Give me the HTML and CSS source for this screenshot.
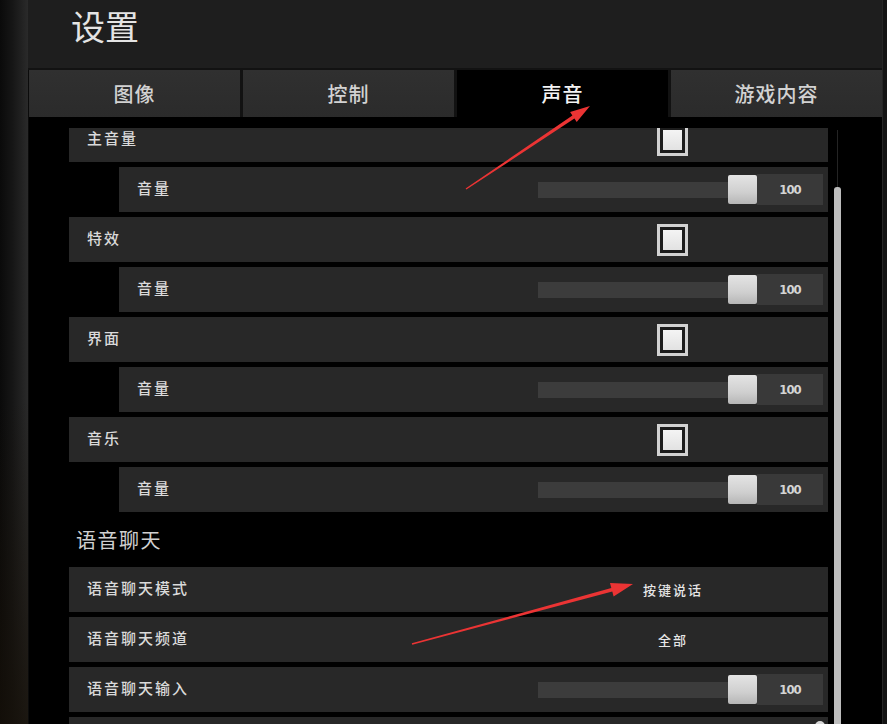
FILE: index.html
```html
<!DOCTYPE html>
<html lang="zh-CN">
<head>
<meta charset="utf-8">
<title>设置</title>
<link rel="stylesheet" href="styles.css">
</head>
<body>
<div class="app">
  <div class="backdrop"></div>
  <div class="panel">
    <header class="head"><h1 class="title">设置</h1></header>
    <nav class="tabs">
      <div class="tab">图像</div>
      <div class="tab">控制</div>
      <div class="tab active">声音</div>
      <div class="tab">游戏内容</div>
    </nav>
    <div class="content">
      <div class="viewport">
        <div class="list">
          <div class="row"><span class="label">主音量</span><div class="ctrl"><span class="check"><span class="check-in"></span></span></div></div>
          <div class="row sub"><span class="label">音量</span><div class="slider"><div class="track"><span class="thumb"></span></div><span class="val">100</span></div></div>
          <div class="row"><span class="label">特效</span><div class="ctrl"><span class="check"><span class="check-in"></span></span></div></div>
          <div class="row sub"><span class="label">音量</span><div class="slider"><div class="track"><span class="thumb"></span></div><span class="val">100</span></div></div>
          <div class="row"><span class="label">界面</span><div class="ctrl"><span class="check"><span class="check-in"></span></span></div></div>
          <div class="row sub"><span class="label">音量</span><div class="slider"><div class="track"><span class="thumb"></span></div><span class="val">100</span></div></div>
          <div class="row"><span class="label">音乐</span><div class="ctrl"><span class="check"><span class="check-in"></span></span></div></div>
          <div class="row sub"><span class="label">音量</span><div class="slider"><div class="track"><span class="thumb"></span></div><span class="val">100</span></div></div>
          <div class="section">语音聊天</div>
          <div class="row"><span class="label">语音聊天模式</span><div class="ctrl"><span class="opt">按键说话</span></div></div>
          <div class="row"><span class="label">语音聊天频道</span><div class="ctrl"><span class="opt">全部</span></div></div>
          <div class="row"><span class="label">语音聊天输入</span><div class="slider"><div class="track"><span class="thumb"></span></div><span class="val">100</span></div></div>
          <div class="row"><span class="label"></span><div class="knob-wrap"><span class="knob"></span></div></div>
        </div>
      </div>
      <div class="scroll"><div class="scroll-thumb"></div></div>
    </div>
  </div>
  <div class="edge"></div>
</div>
<svg class="annot" width="887" height="724" viewBox="0 0 887 724">
  <polygon class="arrow" points="465.6,188.4 572.4,115.6 570.1,112.1 590,106 576.7,122.1 574.4,118.6 466.4,189.6"/>
  <polygon class="arrow" points="411.8,643.3 611.3,588.1 610.0,583.0 633,584 613.6,596.6 612.3,591.5 412.2,644.7"/>
</svg>
</body>
</html>
```
FILE: styles.css
```css
* { box-sizing: border-box; }
html, body { margin: 0; padding: 0; }
body {
  width: 887px;
  height: 724px;
  overflow: hidden;
  background: #000;
  font-family: "Noto Sans CJK SC", "Noto Sans", sans-serif;
  color: #d6d6d6;
  position: relative;
}
.app {
  display: flex;
  height: 724px;
}
.backdrop {
  width: 28px;
  flex: none;
  background:
    linear-gradient(180deg, rgba(0,0,0,0) 55%, rgba(22,16,8,0.75) 100%),
    linear-gradient(90deg, #0a0a0a 0%, #161616 45%, #2a2a2a 100%);
}
.panel {
  flex: none;
  width: 854px;
  background: #000;
  border-left: 1px solid #0b0b0b;
  display: flex;
  flex-direction: column;
}
.edge {
  flex: 1;
  background: linear-gradient(90deg, #262626 0, #262626 1px, #141414 1px);
}
.head {
  height: 70px;
  background: #1e1e1e;
  border-bottom: 2px solid #121212;
  padding: 9px 0 0 43px;
  margin-left: -1px;
}
.title {
  margin: 0;
  font-size: 34px;
  line-height: 34px;
  font-weight: 400;
  color: #e4e4e4;
  letter-spacing: 0;
}
.tabs {
  height: 47px;
  display: grid;
  grid-template-columns: repeat(4, 1fr);
  column-gap: 3px;
  background: #121212;
}
.tab {
  background: linear-gradient(180deg, #303030 0%, #2b2b2b 100%);
  display: flex;
  align-items: center;
  justify-content: center;
  font-size: 20px;
  font-weight: 500;
  color: #d2d2d2;
  letter-spacing: 1px;
  padding-bottom: 1px;
}
.tab.active {
  background: #000;
  color: #f4f4f4;
}
.content {
  flex: 1;
  display: flex;
  min-height: 0;
  position: relative;
}
.viewport {
  margin-top: 11px;
  margin-left: 40px;
  width: 759px;
  overflow: hidden;
}
.list {
  margin-top: -11px;
  display: flex;
  flex-direction: column;
  gap: 5px;
}
.row {
  height: 45px;
  flex: none;
  background: #282828;
  display: flex;
  align-items: center;
  padding-left: 18px;
}
.row.sub {
  margin-left: 50px;
}
.label {
  flex: 1;
  font-size: 15px;
  font-weight: 500;
  letter-spacing: 2px;
  color: #dadada;
  padding-bottom: 4px;
}
.ctrl {
  width: 312px;
  display: flex;
  justify-content: center;
  align-items: center;
}
.check {
  width: 31px;
  height: 32px;
  border: 3px solid #d2d2d2;
  background: #1c1c1c;
  padding: 3px;
  display: flex;
}
.check-in {
  flex: 1;
  background: linear-gradient(180deg, #f4f4f4 0%, #e2e2e2 100%);
}
.opt {
  font-size: 13px;
  font-weight: 500;
  letter-spacing: 2px;
  color: #e6e6e6;
  margin-left: 2px;
}
.slider {
  width: 285px;
  height: 31px;
  margin-right: 5px;
  display: flex;
  align-items: center;
}
.track {
  flex: 1;
  height: 16px;
  background: #3c3c3c;
  display: flex;
  justify-content: flex-end;
  align-items: center;
}
.thumb {
  width: 29px;
  height: 29px;
  border-radius: 2px;
  background: linear-gradient(180deg, #e4e4e4 0%, #cfcfcf 60%, #b6b6b6 100%);
}
.val {
  width: 66px;
  height: 31px;
  background: #393939;
  display: flex;
  align-items: center;
  justify-content: center;
  font-family: "DejaVu Sans Condensed", "DejaVu Sans", sans-serif;
  font-stretch: condensed;
  font-size: 13px;
  font-weight: bold;
  letter-spacing: -1px;
  color: #d4d4d4;
}
.section {
  height: 55px;
  flex: none;
  display: flex;
  align-items: center;
  padding-left: 7px;
  font-size: 20px;
  letter-spacing: 1.5px;
  color: #d0d0d0;
  margin-top: -5px;
  margin-bottom: -5px;
}
.knob-wrap {
  width: 10px;
  margin-right: 3px;
  align-self: flex-start;
  padding-top: 4px;
}
.knob {
  display: block;
  width: 10px;
  height: 10px;
  border-radius: 50%;
  background: #d8d8d8;
}
.scroll {
  margin-left: 6px;
  width: 7px;
  position: relative;
  display: flex;
  flex-direction: column;
  align-items: center;
  padding-top: 13px;
}
.scroll::before {
  content: "";
  width: 1px;
  height: 57px;
  background: #242424;
  flex: none;
}
.scroll-thumb {
  width: 7px;
  flex: 1;
  background: #bdbdbd;
  border-radius: 3px 3px 0 0;
}
.annot {
  position: absolute;
  left: 0;
  top: 0;
  pointer-events: none;
}
.arrow {
  fill: #eb3434;
}
```
